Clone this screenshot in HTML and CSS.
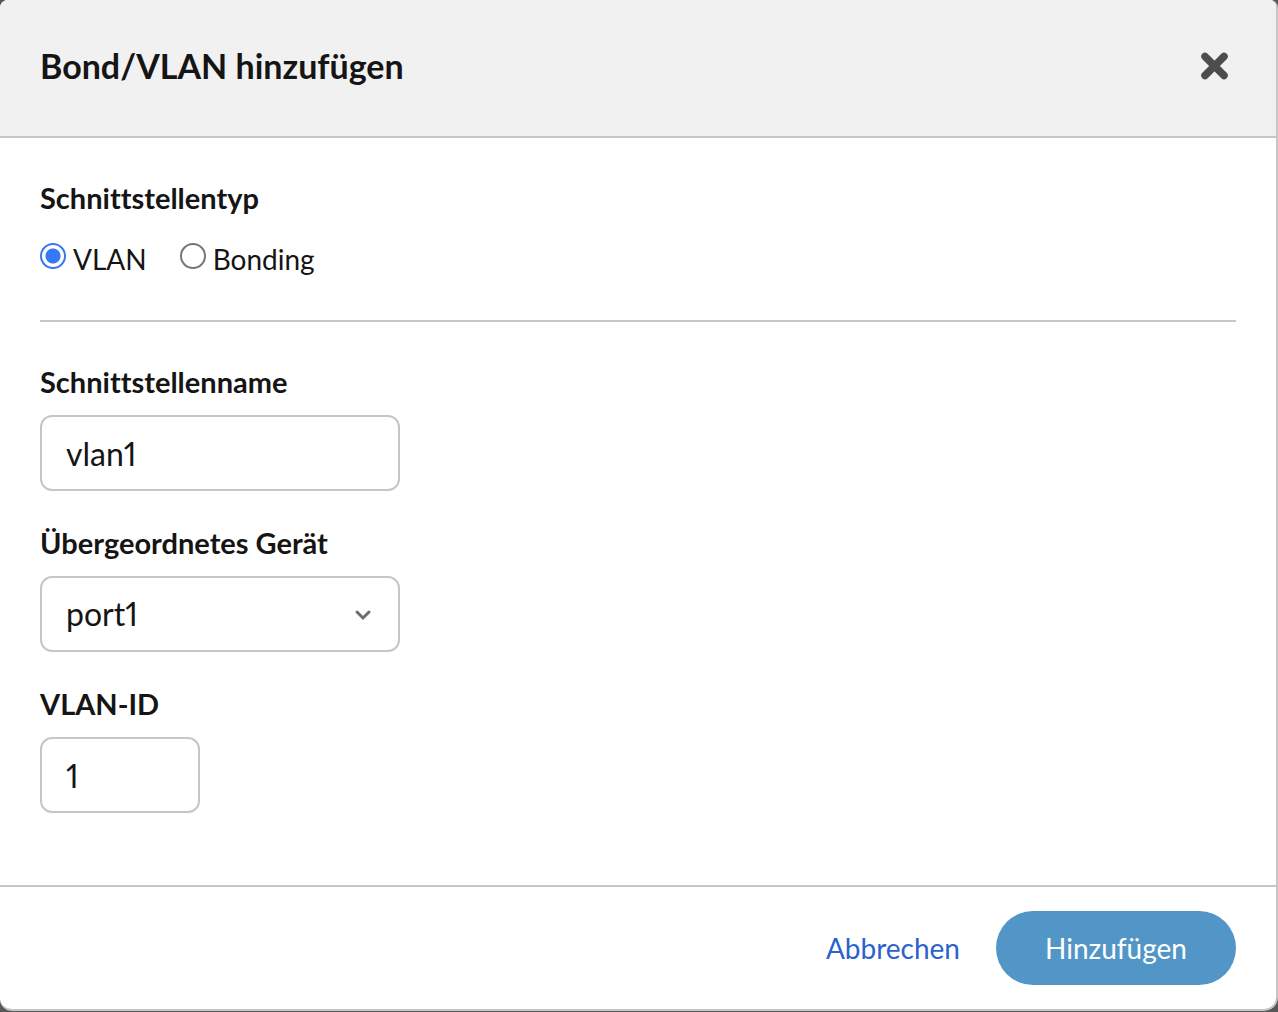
FILE: index.html
```html
<!DOCTYPE html>
<html lang="de">
<head>
<meta charset="utf-8">
<meta name="viewport" content="width=device-width, initial-scale=1">
<title>Bond/VLAN hinzufügen</title>
<link rel="stylesheet" href="styles.css">
</head>
<body>
<form class="dialog" role="dialog" aria-labelledby="dialog-title">
  <header class="dialog-header">
    <h1 class="dialog-title" id="dialog-title">Bond/VLAN hinzufügen</h1>
    <button class="close-button" type="button" aria-label="Schließen">
      <svg class="close-icon" viewBox="0 0 28 28" aria-hidden="true"><path d="M5 4.500L24 23.500M24 4.500L5 23.500"/></svg>
    </button>
  </header>
  <main class="dialog-body">
    <fieldset class="type-group">
      <legend class="label type-legend">Schnittstellentyp</legend>
      <div class="type-options">
        <label class="option"><input class="radio" type="radio" name="type" value="vlan" checked><span>VLAN</span></label>
        <label class="option"><input class="radio" type="radio" name="type" value="bonding"><span>Bonding</span></label>
      </div>
    </fieldset>
    <div class="fields">
      <div class="field">
        <label class="label" for="name">Schnittstellenname</label>
        <input class="control" id="name" type="text" value="vlan1">
      </div>
      <div class="field">
        <label class="label" for="parent">Übergeordnetes Gerät</label>
        <div class="select-wrap">
          <select class="control" id="parent"><option>port1</option><option>port2</option></select>
          <svg class="chevron" viewBox="0 0 18 12" aria-hidden="true"><path d="M3 3L9 9L15 3"/></svg>
        </div>
      </div>
      <div class="field">
        <label class="label" for="vlan-id">VLAN-ID</label>
        <input class="control control-short" id="vlan-id" type="text" inputmode="numeric" value="1">
      </div>
    </div>
  </main>
  <footer class="dialog-footer">
    <button class="button button-link" type="button">Abbrechen</button>
    <button class="button button-primary" type="submit">Hinzufügen</button>
  </footer>
</form>
</body>
</html>
```
FILE: styles.css
```css
*,
*::before,
*::after {
  box-sizing: border-box;
}

body {
  margin: 0;
  min-height: 100vh;
  display: flex;
  padding-bottom: 1px;
  background: #575757;
  color: #151515;
  font-family: Lato, "Liberation Sans", sans-serif;
  font-size: 28px;
  line-height: 42px;
  font-variant-ligatures: none;
  font-variant-numeric: proportional-nums;
}

button,
input,
select {
  font: inherit;
  font-variant-ligatures: inherit;
  font-variant-numeric: inherit;
  color: inherit;
}

.dialog {
  flex: 1;
  display: flex;
  flex-direction: column;
  overflow: hidden;
  background: #fff;
  border: solid #c6c6c6;
  border-width: 0 2px 2px 0;
  border-radius: 8px 8px 14px 12px;
}

.dialog-header {
  display: flex;
  align-items: center;
  justify-content: space-between;
  padding: 40px 40px 44px;
  background: #f1f1f1;
  border-bottom: 2px solid #c6c6c6;
}

.dialog-title {
  margin: 0;
  font-size: 34px;
  line-height: 52px;
  font-weight: 700;
}

.close-button {
  display: flex;
  padding: 8px;
  background: none;
  border: 0;
  cursor: pointer;
}

.close-icon {
  width: 28px;
  height: 28px;
  fill: none;
  stroke: #4d4d4d;
  stroke-width: 7.5;
  stroke-linecap: round;
}

.dialog-body {
  flex: 1;
  padding: 40px 40px 72px;
}

.type-group {
  margin: 0;
  padding: 0 0 40px;
  border: 0;
  border-bottom: 2px solid #c6c6c6;
}

.label {
  font-size: 29px;
  line-height: 40px;
  font-weight: 700;
}

.type-legend {
  padding: 0;
  margin-bottom: 20px;
}

.type-options {
  display: flex;
  gap: 33px;
}

.option {
  display: flex;
  align-items: flex-start;
  gap: 7px;
}

.radio {
  appearance: none;
  width: 26px;
  height: 26px;
  margin: 5px 0 0;
  border: 2px solid #767676;
  border-radius: 50%;
  background: #fff;
}

.radio:checked {
  border-color: #3478f6;
  background: radial-gradient(circle, #3478f6 7px, #fff 8px);
}

.fields {
  display: flex;
  flex-direction: column;
  gap: 32px;
  padding-top: 40px;
}

.field {
  display: flex;
  flex-direction: column;
  align-items: flex-start;
  gap: 13px;
}

.control {
  appearance: none;
  width: 360px;
  max-width: 100%;
  height: 76px;
  padding: 0 24px;
  border: 2px solid #c6c6c6;
  border-radius: 12px;
  background: #fff;
  font-size: 32px;
}

.control-short {
  width: 160px;
}

.select-wrap {
  position: relative;
}

.chevron {
  position: absolute;
  right: 28px;
  top: 33px;
  width: 18px;
  height: 12px;
  fill: none;
  stroke: #6a6e73;
  stroke-width: 3;
  stroke-linecap: round;
  pointer-events: none;
}

.dialog-footer {
  display: flex;
  justify-content: flex-end;
  gap: 36px;
  padding: 24px 40px;
  border-top: 2px solid #c6c6c6;
}

.button {
  height: 74px;
  padding: 0;
  border: 0;
  background: none;
  cursor: pointer;
}

.button-link {
  color: #2b62cc;
}

.button-primary {
  width: 240px;
  border-radius: 37px;
  background: #5296c8;
  color: #fff;
}
```
